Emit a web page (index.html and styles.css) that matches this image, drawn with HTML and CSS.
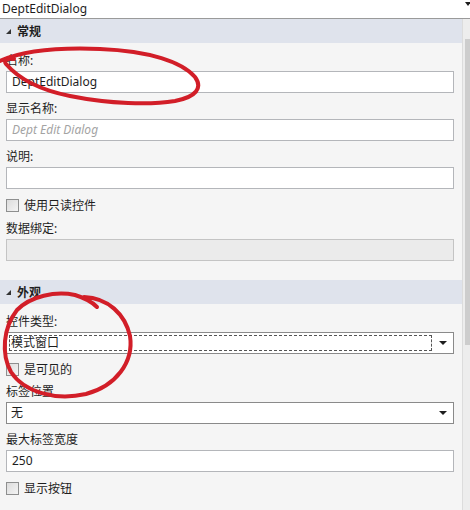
FILE: index.html
```html
<!DOCTYPE html>
<html lang="zh-CN">
<head>
    <meta charset="UTF-8">
    <title>DeptEditDialog 属性</title>
    <link rel="stylesheet" href="styles.css">
</head>
<body>
    <div class="window">
        <div class="toolbar">
            <span class="title">DeptEditDialog</span>
            <span class="toolbar-arrow"></span>
        </div>
        <div class="main">
            <div class="panel">
                <div class="section">
                    <div class="section-header"><span class="expander"></span>常规</div>
                    <div class="section-body">
                        <div class="field first">
                            <label>名称:</label>
                            <div class="textbox">DeptEditDialog</div>
                        </div>
                        <div class="field">
                            <label>显示名称:</label>
                            <div class="textbox placeholder">Dept Edit Dialog</div>
                        </div>
                        <div class="field">
                            <label>说明:</label>
                            <div class="textbox"></div>
                        </div>
                        <div class="check"><span class="box"></span>使用只读控件</div>
                        <div class="field">
                            <label>数据绑定:</label>
                            <div class="textbox disabled"></div>
                        </div>
                    </div>
                </div>
                <div class="section">
                    <div class="section-header"><span class="expander"></span>外观</div>
                    <div class="section-body">
                        <div class="field first">
                            <label>控件类型:</label>
                            <div class="combo focused"><span class="combo-text">模式窗口</span><span class="combo-arrow"></span></div>
                        </div>
                        <div class="check tight"><span class="box"></span>是可见的</div>
                        <div class="field tight">
                            <label>标签位置</label>
                            <div class="combo"><span class="combo-text">无</span><span class="combo-arrow"></span></div>
                        </div>
                        <div class="field">
                            <label>最大标签宽度</label>
                            <div class="textbox">250</div>
                        </div>
                        <div class="check"><span class="box"></span>显示按钮</div>
                    </div>
                </div>
            </div>
            <div class="scrollbar"><div class="thumb"></div></div>
        </div>

        <!-- hand drawn marks over the screenshot -->
        <svg class="marks" width="470" height="510" viewBox="0 0 470 510">
            <path d="M0 61 C20 52 50 47 100 49 C150 51 182 62 195 77 C203 88 196 97 175 101 C150 105 110 104 70 96 C40 90 18 78 6 64 C3 60 8 58 14 59" />
            <path d="M84 297 C108 298 125 314 130 336 C134 362 116 386 86 394 C55 401 24 392 11 372 C1 354 3 328 17 310 C31 296 55 291 75 295 C85 298 92 302 97 307" />
        </svg>
    </div>
</body>
</html>
```

FILE: styles.css
```css
body {
    margin: 0;
    background: #f5f5f5;
    font-family: 'Noto Sans', 'Noto Sans CJK SC', sans-serif;
    font-size: 12px;
    color: #1e1e1e;
}
.window {
    position: relative;
    width: 470px;
    height: 510px;
    overflow: hidden;
}
.toolbar {
    height: 18px;
    background: #ffffff;
    border-bottom: 1px solid #9a9a9a;
    display: flex;
    align-items: center;
    justify-content: space-between;
    padding-left: 2px;
}
.title {
    font-size: 12px;
    line-height: 18px;
    color: #1e1e1e;
}
.toolbar-arrow {
    width: 0;
    height: 0;
    border-left: 3px solid transparent;
    border-right: 3px solid transparent;
    border-top: 4px solid #1e1e1e;
    margin-right: -1px;
    margin-bottom: 10px;
}
.main {
    display: flex;
    height: 491px;
}
.panel {
    flex: 1;
    background: #f5f5f5;
}
.scrollbar {
    width: 7px;
    border-left: 1px solid #dcdcdc;
    background: #ededed;
    padding-top: 20px;
    display: flex;
    justify-content: flex-end;
}
.thumb {
    width: 5px;
    height: 306px;
    background: #cdcdcd;
}
.section-header {
    height: 24px;
    background: #dfe3ec;
    display: flex;
    align-items: center;
    font-weight: bold;
    font-size: 12px;
    padding-left: 6px;
}
.expander {
    width: 0;
    height: 0;
    border-left: 5px solid transparent;
    border-bottom: 5px solid #333;
    margin-right: 6px;
    margin-top: 1px;
}
.section-body {
    padding: 0 8px 19px 6px;
}
.field {
    padding-top: 8px;
}
.field.first {
    padding-top: 10px;
}
.field.tight {
    padding-top: 7px;
}
.field label {
    display: block;
    line-height: 16px;
    height: 16px;
    margin-bottom: 2px;
}
.textbox {
    height: 20px;
    line-height: 20px;
    border: 1px solid #b4b6ba;
    background: #ffffff;
    padding-left: 5px;
    font-size: 12px;
}
.textbox.placeholder {
    color: #a3a3a3;
    font-style: italic;
}
.textbox.disabled {
    background: #ebebeb;
    border-color: #c4c4c4;
}
.combo {
    height: 20px;
    border: 1px solid #8a8a8a;
    background: #ffffff;
    display: flex;
    align-items: center;
    padding: 0 6px 0 2px;
}
.combo-text {
    flex: 1;
    height: 14px;
    line-height: 14px;
    padding-left: 1px;
    border: 1px dashed transparent;
}
.combo.focused .combo-text {
    border-color: #555;
}
.combo-arrow {
    width: 0;
    height: 0;
    border-left: 4px solid transparent;
    border-right: 4px solid transparent;
    border-top: 4px solid #1e1e1e;
    margin-left: 7px;
}
.check {
    display: flex;
    align-items: center;
    height: 16px;
    padding-top: 8px;
}
.check.tight {
    padding-top: 7px;
}
.box {
    width: 11px;
    height: 11px;
    border: 1px solid #8e8f8f;
    background: linear-gradient(135deg, #dcdcdc, #f4f4f4);
    margin-right: 5px;
}
.marks {
    position: absolute;
    left: 0;
    top: 0;
    pointer-events: none;
}
.marks path {
    fill: none;
    stroke: #d21e28;
    stroke-width: 4;
    stroke-linecap: round;
    stroke-linejoin: round;
}
```
